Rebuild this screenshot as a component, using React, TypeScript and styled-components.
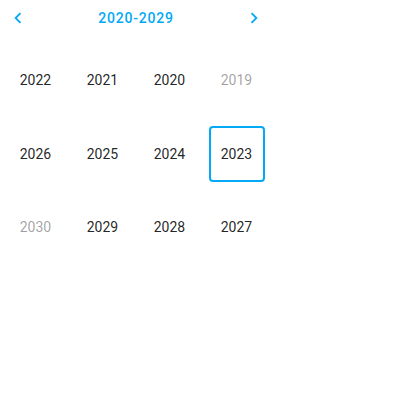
import React from "react";
import styled, { createGlobalStyle } from "styled-components";

const Global = createGlobalStyle`
  html, body { margin: 0; padding: 0; background: #fff; }
  body { font-family: Roboto, "Noto Sans", sans-serif; }
`;

const BLUE = "#03a9f4";

const Picker = styled.div`
  width: 268px;
  margin-left: 2px;
  font-family: Roboto, sans-serif;
`;

const Header = styled.div`
  height: 36px;
  display: flex;
  align-items: center;
  justify-content: space-between;
`;

const NavButton = styled.button`
  width: 32px;
  height: 36px;
  border: 0;
  padding: 0;
  background: transparent;
  display: flex;
  align-items: center;
  justify-content: center;
  color: ${BLUE};
  cursor: pointer;
`;

const Title = styled.div`
  color: ${BLUE};
  font-size: 14px;
  font-weight: 500;
  letter-spacing: 0.8px;
`;

const Grid = styled.div`
  margin-top: 16px;
  display: grid;
  grid-template-columns: repeat(4, 67px);
  grid-auto-rows: 56px;
  row-gap: 17.5px;
  justify-items: center;
`;

const Cell = styled.div<{ $muted?: boolean; $selected?: boolean }>`
  width: 56px;
  height: 56px;
  box-sizing: border-box;
  display: flex;
  align-items: center;
  justify-content: center;
  font-size: 14px;
  color: ${(p) => (p.$muted ? "rgba(0,0,0,0.38)" : "rgba(0,0,0,0.87)")};
  border: 2px solid ${(p) => (p.$selected ? BLUE : "transparent")};
  border-radius: 4px;
`;

const Chevron = ({ dir }: { dir: "left" | "right" }) => (
  <svg width="22" height="22" viewBox="0 0 24 24" fill="currentColor">
    {dir === "left" ? (
      <path d="M15.41 7.41L14 6l-6 6 6 6 1.41-1.41L10.83 12z" />
    ) : (
      <path d="M8.59 16.59L10 18l6-6-6-6-1.41 1.41L13.17 12z" />
    )}
  </svg>
);

const years: { y: number; muted?: boolean; selected?: boolean }[] = [
  { y: 2022 }, { y: 2021 }, { y: 2020 }, { y: 2019, muted: true },
  { y: 2026 }, { y: 2025 }, { y: 2024 }, { y: 2023, selected: true },
  { y: 2030, muted: true }, { y: 2029 }, { y: 2028 }, { y: 2027 },
];

export default function App() {
  return (
    <>
      <Global />
      <Picker>
        <Header>
          <NavButton aria-label="previous">
            <Chevron dir="left" />
          </NavButton>
          <Title>2020-2029</Title>
          <NavButton aria-label="next">
            <Chevron dir="right" />
          </NavButton>
        </Header>
        <Grid>
          {years.map((c) => (
            <Cell key={c.y} $muted={c.muted} $selected={c.selected}>
              {c.y}
            </Cell>
          ))}
        </Grid>
      </Picker>
    </>
  );
}
